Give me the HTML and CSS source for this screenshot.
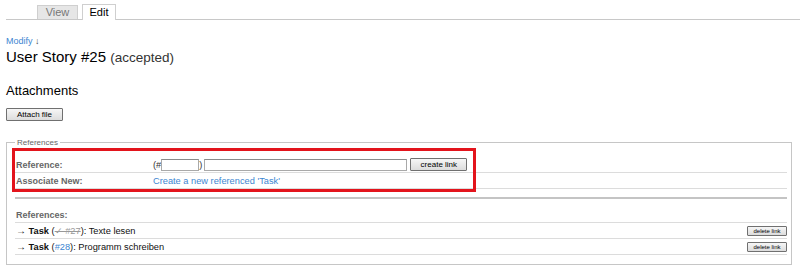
FILE: index.html
```html
<!DOCTYPE html>
<html>
<head>
<meta charset="utf-8">
<title>User Story #25</title>
<link rel="stylesheet" href="styles.css">
</head>
<body>
<div class="tabs">
  <span class="tab">View</span>
  <span class="tab active">Edit</span>
</div>
<div class="page">
  <div class="modify"><a href="#">Modify</a> <span class="down">↓</span></div>
  <h1>User Story #25 <span class="status">(accepted)</span></h1>
  <h2>Attachments</h2>
  <button class="btn attach" type="button">Attach file</button>
  <fieldset class="refs">
    <legend>References</legend>
    <div class="form-area">
      <div class="row">
        <span class="label">Reference:</span>
        <span class="val">(#<input class="in-id" type="text">)<input class="in-text" type="text"><button class="btn create" type="button">create link</button></span>
      </div>
      <div class="row">
        <span class="label">Associate New:</span>
        <a class="val link" href="#">Create a new referenced 'Task'</a>
      </div>
      <div class="highlight"></div>
    </div>
    <div class="sep"></div>
    <div class="row"><span class="label">References:</span></div>
    <div class="row item">
      <span class="ref"><span class="arr">→</span> <b>Task</b> (<span class="closed">✓ #27</span>): Texte lesen</span>
      <button class="btn del" type="button">delete link</button>
    </div>
    <div class="row item">
      <span class="ref"><span class="arr">→</span> <b>Task</b> (<a class="link" href="#">#28</a>): Programm schreiben</span>
      <button class="btn del" type="button">delete link</button>
    </div>
  </fieldset>
</div>
</body>
</html>
```

FILE: styles.css
```css
html, body {
  margin: 0;
  padding: 0;
  background: #fff;
}
body {
  font-family: "Liberation Sans", Arial, sans-serif;
  font-size: 9px;
  color: #000;
}
.tabs {
  display: flex;
  align-items: flex-end;
  gap: 4px;
  height: 20px;
  box-sizing: border-box;
  margin-left: 6px;
  padding-left: 31px;
  border-bottom: 1px solid #c8c8c8;
}
.tab {
  box-sizing: border-box;
  height: 14px;
  width: 41px;
  border: 1px solid #cfcfcf;
  border-bottom: none;
  background: #e6e6e6;
  color: #777;
  font-size: 11px;
  line-height: 13px;
  text-align: center;
}
.tab.active {
  height: 16px;
  width: 34px;
  margin-bottom: -1px;
  background: #fff;
  color: #000;
  line-height: 15px;
}
.page {
  padding: 0 8px 0 6px;
}
.modify {
  margin-top: 16px;
  font-size: 9px;
  line-height: 11px;
}
.modify a {
  color: #3d86d1;
  text-decoration: none;
}
.down {
  color: #444;
}
h1 {
  margin: 1px 0 0;
  font-size: 15px;
  line-height: 18px;
  font-weight: normal;
}
.status {
  font-size: 13.5px;
  color: #333;
}
h2 {
  margin: 16px 0 0;
  font-size: 13px;
  line-height: 16px;
  font-weight: normal;
}
.btn {
  display: block;
  box-sizing: border-box;
  margin: 0;
  padding: 0;
  font-family: "Liberation Sans", Arial, sans-serif;
  color: #000;
  border: 1px solid #707070;
  border-radius: 1px;
  background: linear-gradient(#f6f6f6, #dcdcdc);
  text-align: center;
}
.attach {
  margin-top: 9px;
  width: 57px;
  height: 13px;
  font-size: 8px;
  line-height: 11px;
}
.refs {
  margin: 16px 0 0;
  padding: 0 4px 9px 8px;
  border: 1px solid #c6c6c6;
  min-width: 0;
}
.refs legend {
  padding: 0 2px;
  margin-left: 0;
  font-size: 8px;
  line-height: 11px;
  color: #666;
}
.form-area {
  position: relative;
  margin-top: 9px;
}
.row {
  display: flex;
  align-items: center;
  height: 15px;
  padding-left: 1px;
  border-bottom: 1px solid #dcdcdc;
  font-size: 9px;
}
.label {
  width: 137px;
  flex: none;
  font-weight: bold;
  color: #666;
}
.val {
  display: flex;
  align-items: center;
  color: #333;
  font-size: 9.25px;
}
.link {
  color: #3d86d1;
  text-decoration: none;
}
.in-id, .in-text {
  box-sizing: border-box;
  height: 12px;
  margin: 0;
  padding: 0;
  border: 1px solid #a9a9a9;
  border-top-color: #8a8a8a;
  background: #fff;
}
.in-id {
  width: 38px;
  margin-left: 0;
}
.in-text {
  width: 203px;
  margin-left: 2px;
}
.create {
  width: 57px;
  height: 13px;
  margin-left: 3px;
  font-size: 8px;
  line-height: 11px;
}
.highlight {
  position: absolute;
  left: -3px;
  top: -9px;
  width: 464px;
  height: 44px;
  box-sizing: border-box;
  border: 3px solid #e3141c;
  pointer-events: none;
}
.sep {
  margin-top: 8px;
  height: 2px;
  background: #c4c4c4;
  margin-bottom: 8px;
}
.item {
  justify-content: space-between;
  color: #111;
  font-size: 9.25px;
}
.arr {
  font-size: 10px;
}
.closed {
  color: #999;
  text-decoration: line-through;
}
.del {
  width: 40px;
  height: 10px;
  font-size: 6px;
  line-height: 8px;
  margin-right: 0;
}
```
